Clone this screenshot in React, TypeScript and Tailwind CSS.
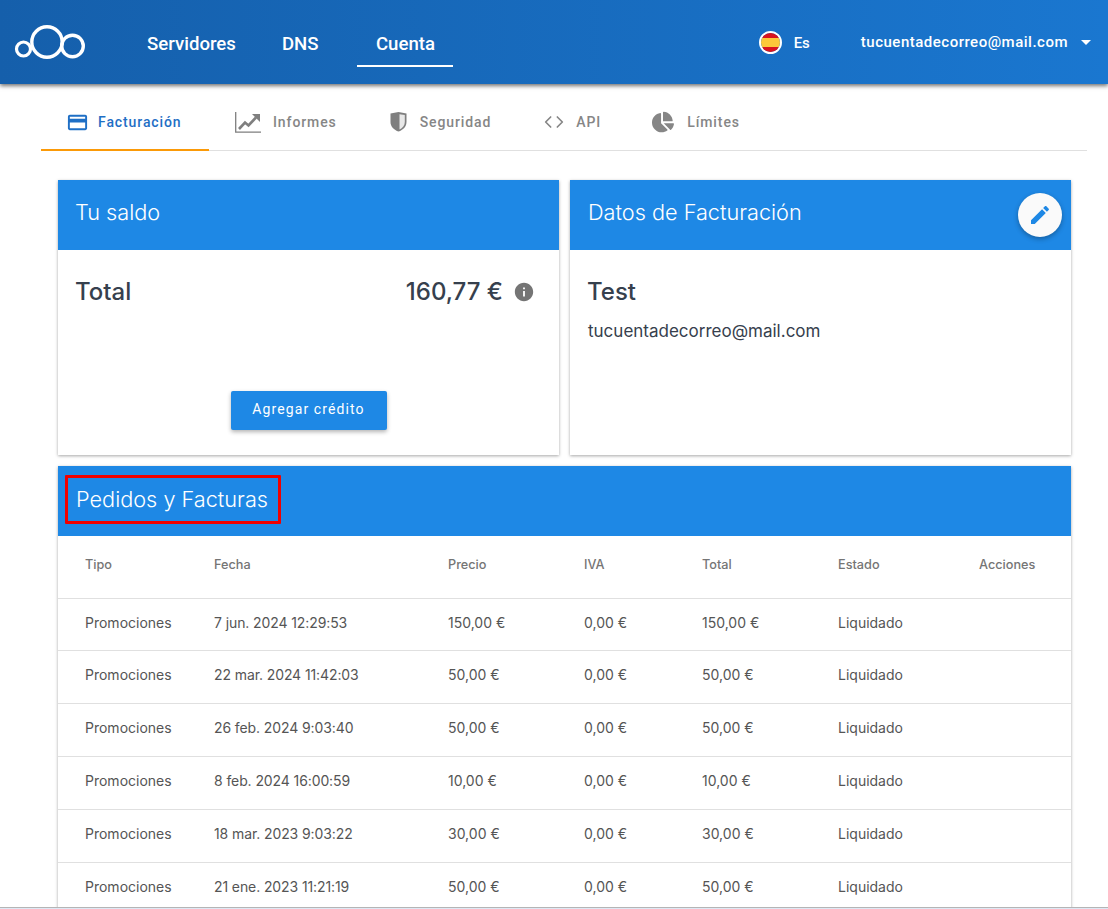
import { Code } from 'lucide-react';
import { FaChartPie } from 'react-icons/fa';

const rows = [
  ['Promociones', '7 jun. 2024 12:29:53', '150,00 €', '0,00 €', '150,00 €', 'Liquidado'],
  ['Promociones', '22 mar. 2024 11:42:03', '50,00 €', '0,00 €', '50,00 €', 'Liquidado'],
  ['Promociones', '26 feb. 2024 9:03:40', '50,00 €', '0,00 €', '50,00 €', 'Liquidado'],
  ['Promociones', '8 feb. 2024 16:00:59', '10,00 €', '0,00 €', '10,00 €', 'Liquidado'],
  ['Promociones', '18 mar. 2023 9:03:22', '30,00 €', '0,00 €', '30,00 €', 'Liquidado'],
  ['Promociones', '21 ene. 2023 11:21:19', '50,00 €', '0,00 €', '50,00 €', 'Liquidado'],
];

function Logo() {
  return (
    <svg width="72" height="38" viewBox="0 0 72 38" fill="none" stroke="white">
      <circle cx="9.5" cy="26" r="7" strokeWidth="3.2" />
      <circle cx="33" cy="19" r="15.2" strokeWidth="3.4" />
      <circle cx="58.5" cy="23" r="10.8" strokeWidth="3.4" />
    </svg>
  );
}

function Flag() {
  return (
    <div className="h-[23px] w-[23px] overflow-hidden rounded-full border-2 border-white">
      <div className="h-[5px] bg-[#d8141f]" />
      <div className="h-[9px] bg-[#fcc83a]" />
      <div className="h-[5px] bg-[#d8141f]" />
    </div>
  );
}

function CardIcon() {
  return (
    <svg width="23" height="23" viewBox="0 0 24 24" fill="#1f6fc5" className="mr-[9px]">
      <path d="M20 4H4c-1.11 0-1.99.89-1.99 2L2 18c0 1.11.89 2 2 2h16c1.11 0 2-.89 2-2V6c0-1.11-.89-2-2-2zm0 14H4v-6h16v6zm0-10H4V6h16v2z" />
    </svg>
  );
}

function ReportIcon() {
  return (
    <svg width="26" height="21" viewBox="0 0 26 21" fill="none" stroke="#7f7f7f" className="mr-[12px]">
      <path d="M0.7 0V20.2H26" strokeWidth="1.3" />
      <path d="M4 17L10 10.5L13.5 13.5L21 5.5" strokeWidth="2.6" />
      <path d="M17 2H25V10Z" fill="#7f7f7f" stroke="none" />
    </svg>
  );
}

function ShieldIcon() {
  return (
    <svg width="17" height="20" viewBox="0 0 17 20" className="mr-[13px]">
      <path d="M0.5 1.5L8.5 0L16.5 1.5V10C16.5 14.5 13 18.2 8.5 19.5C4 18.2 0.5 14.5 0.5 10Z" fill="#7f7f7f" />
      <path d="M9.5 2.2L14.8 3V10C14.8 13.4 12.6 16.2 9.5 17.5Z" fill="#e8e8e8" />
    </svg>
  );
}

function Tab({ icon, label, className }: { icon: React.ReactNode; label: string; className: string }) {
  return (
    <div className={`flex h-full items-center pt-[10px] font-['Roboto',sans-serif] text-[14px] font-medium tracking-[0.9px] text-[#868686] ${className}`}>
      {icon}
      {label}
    </div>
  );
}

export default function App() {
  return (
    <div className="relative h-[909px] overflow-hidden bg-white font-['Inter',sans-serif]">
      <header className="flex h-[84px] items-center bg-gradient-to-r from-[#155fab] to-[#1a77d0] pl-[14px] pr-[17px] font-['Roboto',sans-serif] text-white shadow-[0_2px_4px_rgba(0,0,0,0.55)]">
        <Logo />
        <nav className="mb-[17px] ml-[61px] flex items-center self-end text-[18.6px] font-medium">
          <span className="flex h-[46px] items-center border-b-2 border-transparent pt-[4px]">Servidores</span>
          <span className="ml-[46px] flex h-[46px] items-center border-b-2 border-transparent pt-[4px]">DNS</span>
          <span className="ml-[39px] flex h-[46px] w-[96px] items-center justify-center border-b-2 border-white pt-[4px]">Cuenta</span>
        </nav>
        <div className="ml-auto flex items-center">
          <Flag />
          <span className="ml-[12px] mt-[3px] text-[15px] font-medium">Es</span>
          <span className="ml-[51px] text-[15px] font-medium tracking-[0.5px]">tucuentadecorreo@mail.com</span>
          <span className="ml-[13px] h-0 w-0 border-x-[5px] border-t-[5px] border-x-transparent border-t-white" />
        </div>
      </header>

      <div className="mx-[41px] mr-[21px] flex h-[67px] border-b border-[#e0e0e0]">
        <div className="flex h-[67px] w-[168px] items-center border-b-2 border-[#fb9a08] pl-[25px] pt-[12px] font-['Roboto',sans-serif] text-[14px] font-medium tracking-[0.9px] text-[#1f6fc5]">
          <CardIcon />
          Facturación
        </div>
        <Tab className="ml-[26px]" label="Informes" icon={<ReportIcon />} />
        <Tab className="ml-[53px]" label="Seguridad" icon={<ShieldIcon />} />
        <Tab className="ml-[53px]" label="API" icon={<Code size={20} className="mr-[12px]" />} />
        <Tab className="ml-[51px]" label="Límites" icon={<FaChartPie size={22} className="mr-[13px]" />} />
      </div>

      <main className="ml-[58px] mr-[37px] pt-[29px]">
        <div className="flex gap-[11px]">
          <section className="flex h-[275px] w-[501px] flex-col bg-white shadow-[0_1px_3px_rgba(0,0,0,0.35)]">
            <div className="flex h-[70px] items-center bg-[#1e88e5] px-[17px] pb-[6px] text-[21.7px] font-light text-white">Tu saldo</div>
            <div className="flex items-center justify-between pl-[17px] pr-[24px] pt-[24px] text-[24px] font-medium text-[#36404d]">
              <span>Total</span>
              <span className="flex items-center">
                160,77 €
                <svg width="22" height="22" viewBox="0 0 24 24" fill="#757575" className="ml-[10px]">
                  <path d="M12 2C6.48 2 2 6.48 2 12s4.48 10 10 10 10-4.48 10-10S17.52 2 12 2zm1 15h-2v-6h2v6zm0-8h-2V7h2v2z" />
                </svg>
              </span>
            </div>
            <button className="mx-auto mt-auto mb-[25px] h-[39px] w-[156px] rounded-[2px] bg-[#1e88e5] pb-[2px] font-['Roboto',sans-serif] text-[14px] tracking-[1.1px] text-white shadow-[0_2px_4px_rgba(0,0,0,0.3)]">
              Agregar crédito
            </button>
          </section>
          <section className="h-[275px] w-[501px] bg-white shadow-[0_1px_3px_rgba(0,0,0,0.35)]">
            <div className="relative flex h-[70px] items-center bg-[#1e88e5] px-[18px] pb-[6px] text-[21.7px] font-light text-white">
              Datos de Facturación
              <div className="absolute right-[9px] top-[13px] flex h-[44px] w-[44px] items-center justify-center rounded-full bg-[#fafafa] shadow-[0_2px_5px_rgba(0,0,0,0.3)]">
                <svg width="24" height="24" viewBox="0 0 24 24" fill="#1e88e5">
                  <path d="M3 17.25V21h3.75L17.81 9.94l-3.75-3.75L3 17.25zM20.71 7.04c.39-.39.39-1.02 0-1.41l-2.34-2.34c-.39-.39-1.02-.39-1.41 0l-1.83 1.83 3.75 3.75 1.83-1.83z" />
                </svg>
              </div>
            </div>
            <div className="px-[17px] pt-[24px] text-[#36404d]">
              <div className="text-[24px] font-medium">Test</div>
              <div className="mt-[9px] pl-[1px] text-[17px]">tucuentadecorreo@mail.com</div>
            </div>
          </section>
        </div>

        <section className="mt-[11px] w-[1013px] bg-white shadow-[0_1px_3px_rgba(0,0,0,0.35)]">
          <div className="flex h-[70px] items-center bg-[#1e88e5] px-[7px] pb-[3px] text-[21.7px] font-light text-white">
            <div className="flex h-[49px] w-[216px] items-center rounded-[1px] border-[3px] border-[#f00000] pl-[8px]">Pedidos y Facturas</div>
          </div>
          <table className="w-full table-fixed text-left text-[14px] text-[#555]">
            <thead>
              <tr className="h-[62px] border-b border-[#e0e0e0] text-[12.7px] text-[#757575]">
                <th className="w-[156px] pb-[4px] pl-[27px] font-medium">Tipo</th>
                <th className="w-[234px] pb-[4px] font-medium">Fecha</th>
                <th className="w-[136px] pb-[4px] font-medium">Precio</th>
                <th className="w-[118px] pb-[4px] font-medium">IVA</th>
                <th className="w-[136px] pb-[4px] font-medium">Total</th>
                <th className="w-[141px] pb-[4px] font-medium">Estado</th>
                <th className="pb-[4px] font-medium">Acciones</th>
              </tr>
            </thead>
            <tbody>
              {rows.map((r, i) => (
                <tr key={r[1]} className={`border-b border-[#e0e0e0] ${i === 0 ? 'h-[52px]' : 'h-[53px]'}`}>
                  <td className="pb-[4px] pl-[27px]">{r[0]}</td>
                  <td className="pb-[4px] tracking-[-0.1px]">{r[1]}</td>
                  <td className="pb-[4px]">{r[2]}</td>
                  <td className="pb-[4px]">{r[3]}</td>
                  <td className="pb-[4px]">{r[4]}</td>
                  <td className="pb-[4px]">{r[5]}</td>
                  <td />
                </tr>
              ))}
            </tbody>
          </table>
        </section>
      </main>

      <div className="absolute inset-x-0 bottom-0 h-[2px] border-t border-[#b5b5b5] bg-[#dfe8f5]" />
    </div>
  );
}
